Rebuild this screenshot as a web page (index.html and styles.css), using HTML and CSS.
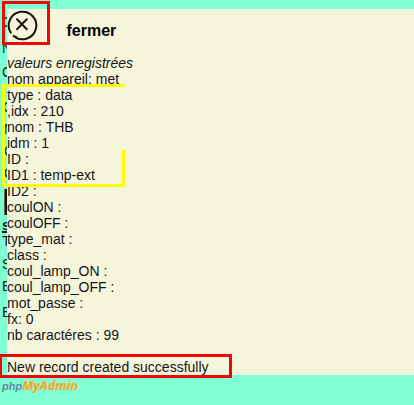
FILE: index.html
```
<!DOCTYPE html>
<html lang="fr">
<head>
<meta charset="utf-8">
<title>Valeurs enregistrées</title>
<link rel="stylesheet" href="styles.css">
</head>
<body>
<div class="behind" aria-hidden="true">
<span class="r1">C</span><span class="r2">N</span><span class="r3">C</span><span class="r4">C</span><span class="r5">N</span><span class="r6">C</span><span class="r7">C</span><span class="r8">L</span><span class="r9">s</span><span class="r10">T</span><span class="r11">S</span><span class="r12">E</span><span class="r13">E</span>
</div>
<main class="panel">
<header class="head">
<svg class="close" width="30" height="32" viewBox="0 0 30 32"><path d="M6.6 27A13.8 13.8 0 1 0 3.7 23.6M10 10.3L19.8 20.2M19.8 10.3L10 20.2M7.2 27.2L9.5 28.4"/></svg>
<b class="title">fermer</b>
</header>
<div class="values">
<p><i>valeurs enregistrées</i></p>
<p>nom appareil: met</p>
<p>type : data</p>
<p>,idx : 210</p>
<p>nom : THB</p>
<p>idm : 1</p>
<p>ID :</p>
<p>ID1 : temp-ext</p>
<p>ID2 :</p>
<p>coulON :</p>
<p>coulOFF :</p>
<p>type_mat :</p>
<p>class :</p>
<p>coul_lamp_ON :</p>
<p>coul_lamp_OFF :</p>
<p>mot_passe :</p>
<p>fx: 0</p>
<p>nb caractéres : 99</p>
<p class="result">New record created successfully</p>
</div>
</main>
<footer class="logo"><span class="php">php</span><span class="admin">MyAdmin</span></footer>
<div class="mark mark-close"></div>
<div class="mark mark-result"></div>
<svg class="mark-values" width="123" height="104" viewBox="0 0 123 104"><path d="M123 1.5H1.5V101.5H121.5V66"/></svg>
</body>
</html>
```
FILE: styles.css
```
* { box-sizing: border-box; }
body {
  margin: 0;
  height: 405px;
  position: relative;
  overflow: hidden;
  background: #7fffd4;
  color: #161616;
  font: 14px/16px "Liberation Sans", Arial, sans-serif;
}
.behind { position: absolute; inset: 0 auto auto 0; width: 7px; height: 375px; overflow: hidden; }
.behind span { position: absolute; left: 2px; }
.behind .r1 { top: 14px; }
.behind .r2 { top: 40px; }
.behind .r3 { top: 64px; }
.behind .r4 { top: 99px; left: 3px; }
.behind .r5 { top: 121px; left: 4px; }
.behind .r6 { top: 143px; left: 4px; }
.behind .r7 { top: 165px; left: 4px; }
.behind .r8 { top: 191px; left: 2px; font-size: 36px; line-height: 24px; font-weight: bold; }
.behind .r9 { top: 217px; font-weight: bold; text-decoration: underline 2px; }
.behind .r10 { top: 233px; }
.behind .r11 { top: 256px; }
.behind .r12 { top: 278px; }
.behind .r13 { top: 304px; }
.panel { position: relative; margin: 9px 0 0 7px; height: 366px; background: #f5f5dc; }
.head { display: flex; height: 46px; }
.close { display: block; overflow: visible; }
.close path { fill: none; stroke: #161610; stroke-width: 2; stroke-linecap: round; }
.title { margin: 14px 0 0 29.5px; font-size: 16px; color: #000; }
.values p { margin: 0; white-space: nowrap; }
.values .result { margin-top: 16px; }
.logo { padding: 3px 0 0 2px; font-style: italic; line-height: 15px; display: flex; }
.php { font-size: 11px; font-weight: bold; color: #6586ab; line-height: 17px; }
.admin { font: italic bold 12.6px/15px "Open Sans", sans-serif; color: #e8ac2b; text-shadow: 0 0 2px #f5cdb0; }
.mark { position: absolute; border: 3px solid #ed0909; }
.mark-close { left: 2px; top: 1px; width: 48px; height: 44px; }
.mark-result { left: -1px; top: 354px; width: 233px; height: 24px; }
.mark-values { position: absolute; left: 2px; top: 84px; }
.mark-values path { fill: none; stroke: #ffff00; stroke-width: 3; }
```
